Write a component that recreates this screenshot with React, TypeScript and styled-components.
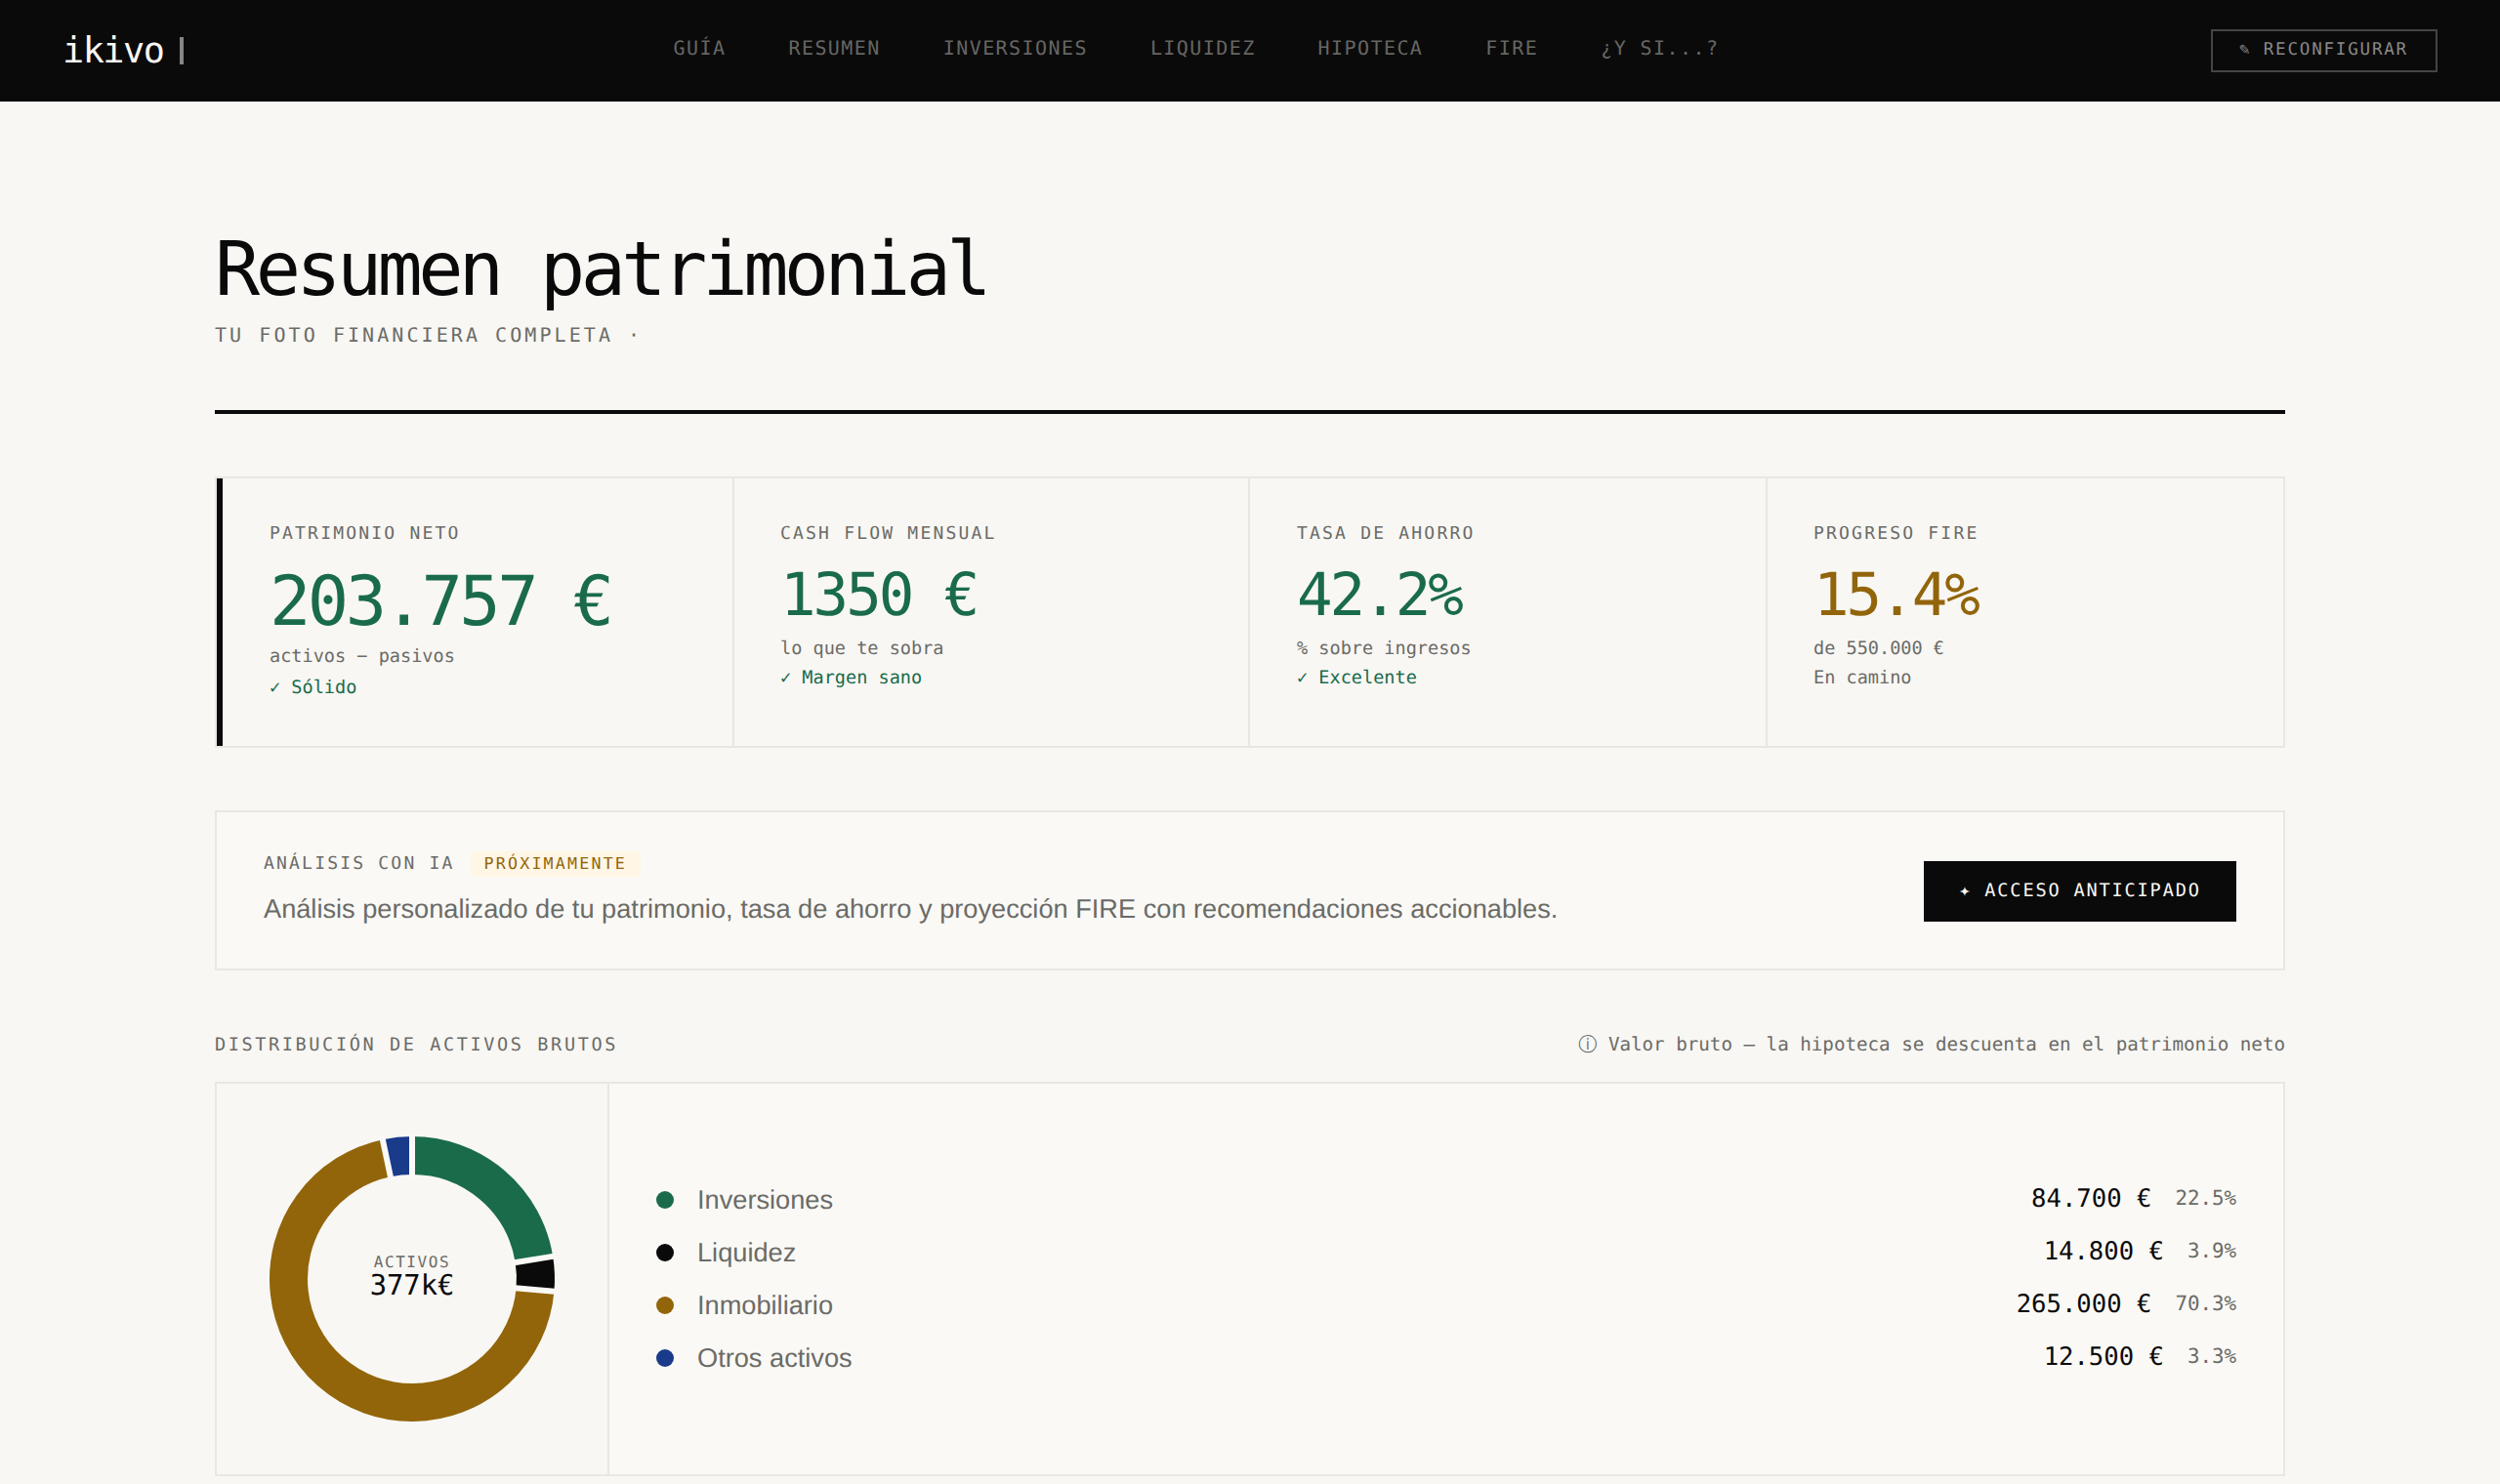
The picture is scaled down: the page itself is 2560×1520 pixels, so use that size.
import React from "react";
import styled, { createGlobalStyle } from "styled-components";

const c = {
  ink: "#0a0a0a",
  page: "#f8f7f4",
  panel: "#faf9f6",
  line: "#e8e7e3",
  muted: "#6b6b67",
  green: "#1a6b4a",
  amber: "#92650a",
  blue: "#1a3a8a",
};
const mono = `"DejaVu Sans Mono", monospace`;
const sans = `"Liberation Sans", Arial, sans-serif`;

const Global = createGlobalStyle`
  * { box-sizing: border-box; }
  html, body { margin: 0; background: ${c.page}; }
  body {
    font-family: ${mono};
    color: ${c.ink};
    overflow: hidden;
    text-rendering: geometricPrecision;
  }
  button { text-rendering: inherit; }
`;

const Page = styled.div`
  width: 2560px;
  height: 1520px;
  overflow: hidden;
  background: ${c.page};
`;

const Header = styled.header`
  display: flex;
  align-items: center;
  justify-content: space-between;
  height: 104px;
  padding: 0 64px;
  background: ${c.ink};
`;
const Logo = styled.div`
  display: flex;
  align-items: center;
  gap: 16.6px;
  font-size: 36.8px;
  letter-spacing: -0.04em;
  line-height: 56px;
  color: ${c.page};
`;
const Caret = styled.span`
  width: 4px;
  height: 28px;
  background: #858583;
`;
const Nav = styled.nav`
  display: flex;
  gap: 64px;
  padding: 0 2px 6px 0;
`;
const NavLink = styled.a`
  font-size: 20px;
  letter-spacing: 1.425px;
  line-height: 32px;
  color: #666663;
`;
const Reconfigure = styled.button`
  width: 232px;
  height: 44px;
  padding: 0 1px 2px 0;
  border: 2px solid #444;
  background: transparent;
  color: #888;
  font: 17.6px/36px ${mono};
  letter-spacing: 0.1em;
`;

const Main = styled.main`
  display: flex;
  flex-direction: column;
  padding: 128px 220px 0;
`;
const Hero = styled.section`
  height: 192px;
  border-bottom: 4px solid ${c.ink};
`;
const Title = styled.h1`
  margin: 0;
  font-size: 76.8px;
  font-weight: 400;
  line-height: 90px;
  letter-spacing: -0.06em;
`;
const Subtitle = styled.p`
  margin: 6px 0 0;
  font-size: 20px;
  letter-spacing: 3.07px;
  line-height: 30px;
  color: ${c.muted};
`;

const Metrics = styled.section`
  display: grid;
  grid-template-columns: 530fr 528fr 530fr 528fr;
  height: 278px;
  margin-top: 64px;
  border: 2px solid ${c.line};
`;
const Metric = styled.article<{ $lead?: boolean }>`
  padding: 41px 47px 0 48px;
  border-right: 2px solid ${c.line};
  border-left: ${(p) => (p.$lead ? `6px solid ${c.ink}` : "0")};
  &:nth-child(even) {
    padding-left: 47px;
  }
  &:last-child {
    border-right: 0;
  }
`;
const Label = styled.div`
  font-size: 18px;
  letter-spacing: 2.2px;
  line-height: 32px;
  color: ${c.muted};
`;
const Value = styled.div<{ $lead?: boolean; $color: string }>`
  margin: ${(p) => (p.$lead ? "17px 0 6px" : "17px 0 10px")};
  font-size: ${(p) => (p.$lead ? 70.4 : 60.8)}px;
  line-height: ${(p) => (p.$lead ? 72 : 60)}px;
  letter-spacing: -0.05em;
  color: ${(p) => p.$color};
`;
const Note = styled.div<{ $color?: string; $gap?: number }>`
  margin-top: ${(p) => p.$gap ?? 0}px;
  font-size: 18.56px;
  line-height: 30px;
  color: ${(p) => p.$color ?? c.muted};
`;

const Analysis = styled.section`
  display: flex;
  align-items: center;
  justify-content: space-between;
  height: 164px;
  margin-top: 64px;
  padding: 0 48px;
  border: 2px solid ${c.line};
  background: ${c.panel};
`;
const AnalysisHead = styled.div`
  display: flex;
  align-items: flex-start;
  gap: 16px;
  font-size: 18px;
  letter-spacing: 2.2px;
  line-height: 26px;
  color: ${c.muted};
`;
const Badge = styled.span`
  height: 26px;
  padding: 0 14px;
  font-size: 16.64px;
  background: #fff6e5;
  color: ${c.amber};
`;
const AnalysisText = styled.p`
  margin: 11px 0 -1px;
  font: 27.2px/44px ${sans};
  color: ${c.muted};
`;
const Early = styled.button`
  width: 320px;
  height: 62px;
  margin-top: 2px;
  padding: 0;
  border: 0;
  background: ${c.ink};
  color: ${c.page};
  font: 18.56px/60px ${mono};
  letter-spacing: 0.1em;
`;

const SectionHead = styled.div`
  display: flex;
  justify-content: space-between;
  height: 32px;
  margin: 60px 0 22px;
  line-height: 32px;
  color: ${c.muted};
`;
const SectionTitle = styled.span`
  font-size: 18.56px;
  letter-spacing: 0.14em;
  line-height: 34px;
`;
const SectionNote = styled.span`
  font-size: 19.2px;
`;

const Distribution = styled.section`
  display: grid;
  grid-template-columns: 402px 1fr;
  height: 404px;
  border: 2px solid ${c.line};
  background: ${c.panel};
`;
const ChartCell = styled.div`
  display: grid;
  place-items: center;
  border-right: 2px solid ${c.line};
  background: ${c.page};
  > * {
    grid-area: 1 / 1;
  }
`;
const ChartCenter = styled.div`
  display: flex;
  flex-direction: column;
  align-items: center;
  padding-bottom: 5px;
`;
const ChartLabel = styled.span`
  font-size: 16px;
  letter-spacing: 0.1em;
  line-height: 17px;
  color: ${c.muted};
`;
const ChartTotal = styled.span`
  font-size: 28.8px;
  line-height: 30px;
`;

const Legend = styled.ul`
  display: flex;
  flex-direction: column;
  justify-content: center;
  gap: 24px;
  margin: 0;
  padding: 0 48px;
  list-style: none;
`;
const LegendRow = styled.li`
  display: flex;
  align-items: center;
  height: 30px;
`;
const Dot = styled.span<{ $color: string }>`
  width: 18px;
  height: 18px;
  margin-right: 24px;
  border-radius: 50%;
  background: ${(p) => p.$color};
`;
const LegendName = styled.span`
  flex: 1;
  font: 27.2px/30px ${sans};
  color: ${c.muted};
`;
const LegendFigures = styled.span`
  display: flex;
  align-items: flex-start;
  gap: 24px;
  padding-bottom: 3px;
  font-size: 25.6px;
  line-height: 30px;
`;
const Percent = styled.span`
  font-size: 20.8px;
  line-height: 29px;
  color: ${c.muted};
`;

const nav = ["GUÍA", "RESUMEN", "INVERSIONES", "LIQUIDEZ", "HIPOTECA", "FIRE", "¿Y SI...?"];

const metrics = [
  { label: "PATRIMONIO NETO", value: "203.757 €", note: "activos − pasivos", status: "✓ Sólido", color: c.green, statusColor: c.green, lead: true },
  { label: "CASH FLOW MENSUAL", value: "1350 €", note: "lo que te sobra", status: "✓ Margen sano", color: c.green, statusColor: c.green },
  { label: "TASA DE AHORRO", value: "42.2%", note: "% sobre ingresos", status: "✓ Excelente", color: c.green, statusColor: c.green },
  { label: "PROGRESO FIRE", value: "15.4%", note: "de 550.000 €", status: "En camino", color: c.amber, statusColor: c.muted },
];

const assets = [
  { name: "Inversiones", amount: 84700, text: "84.700 €", pct: "22.5%", color: c.green },
  { name: "Liquidez", amount: 14800, text: "14.800 €", pct: "3.9%", color: c.ink },
  { name: "Inmobiliario", amount: 265000, text: "265.000 €", pct: "70.3%", color: c.amber },
  { name: "Otros activos", amount: 12500, text: "12.500 €", pct: "3.3%", color: c.blue },
];

function Donut() {
  const total = assets.reduce((s, a) => s + a.amount, 0);
  let acc = 0;
  const arcs = assets.map((a) => {
    const start = acc / total;
    acc += a.amount;
    return { color: a.color, start, end: acc / total };
  });
  const at = (f: number, r: number) => {
    const t = f * 2 * Math.PI;
    return `${150 + r * Math.sin(t)} ${150 - r * Math.cos(t)}`;
  };
  return (
    <svg width="300" height="300" viewBox="0 0 300 300" fill="none">
      {arcs.map((s) => (
        <path
          key={s.color}
          d={`M${at(s.start, 126.5)} A126.5 126.5 0 ${s.end - s.start > 0.5 ? 1 : 0} 1 ${at(s.end, 126.5)}`}
          stroke={s.color}
          strokeWidth="39"
        />
      ))}
      {arcs.map((s) => (
        <path key={s.color} d={`M${at(s.start, 103)} L${at(s.start, 149)}`} stroke={c.panel} strokeWidth="6" />
      ))}
    </svg>
  );
}

export default function App() {
  return (
    <Page>
      <Global />
      <Header>
        <Logo>
          ikivo
          <Caret />
        </Logo>
        <Nav>
          {nav.map((n) => (
            <NavLink key={n}>{n}</NavLink>
          ))}
        </Nav>
        <Reconfigure>✎ RECONFIGURAR</Reconfigure>
      </Header>
      <Main>
        <Hero>
          <Title>Resumen patrimonial</Title>
          <Subtitle>TU FOTO FINANCIERA COMPLETA ·</Subtitle>
        </Hero>
        <Metrics>
          {metrics.map((m) => (
            <Metric key={m.label} $lead={m.lead}>
              <Label>{m.label}</Label>
              <Value $lead={m.lead} $color={m.color}>
                {m.value}
              </Value>
              <Note>{m.note}</Note>
              <Note $color={m.statusColor} $gap={m.lead ? 2 : 0}>
                {m.status}
              </Note>
            </Metric>
          ))}
        </Metrics>
        <Analysis>
          <div>
            <AnalysisHead>
              ANÁLISIS CON IA
              <Badge>PRÓXIMAMENTE</Badge>
            </AnalysisHead>
            <AnalysisText>
              Análisis personalizado de tu patrimonio, tasa de ahorro y proyección FIRE con recomendaciones accionables.
            </AnalysisText>
          </div>
          <Early>✦ ACCESO ANTICIPADO</Early>
        </Analysis>
        <SectionHead>
          <SectionTitle>DISTRIBUCIÓN DE ACTIVOS BRUTOS</SectionTitle>
          <SectionNote>ⓘ Valor bruto — la hipoteca se descuenta en el patrimonio neto</SectionNote>
        </SectionHead>
        <Distribution>
          <ChartCell>
            <Donut />
            <ChartCenter>
              <ChartLabel>ACTIVOS</ChartLabel>
              <ChartTotal>377k€</ChartTotal>
            </ChartCenter>
          </ChartCell>
          <Legend>
            {assets.map((a) => (
              <LegendRow key={a.name}>
                <Dot $color={a.color} />
                <LegendName>{a.name}</LegendName>
                <LegendFigures>
                  {a.text}
                  <Percent>{a.pct}</Percent>
                </LegendFigures>
              </LegendRow>
            ))}
          </Legend>
        </Distribution>
      </Main>
    </Page>
  );
}
